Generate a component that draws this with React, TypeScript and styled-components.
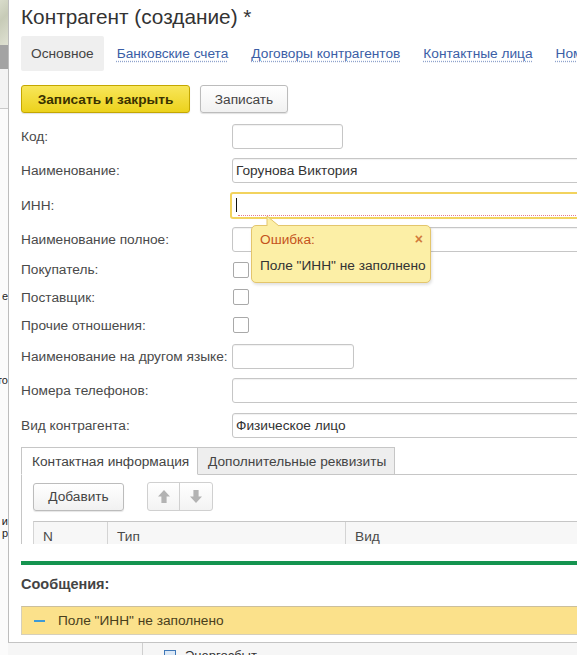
import React from 'react';
import styled, { createGlobalStyle } from 'styled-components';

const Global = createGlobalStyle`
  html, body { margin: 0; padding: 0; overflow: hidden; background: #ffffff; }
  body { font-family: "Liberation Sans", Arial, sans-serif; }
  * { box-sizing: border-box; }
`;

const Page = styled.div`
  width: 577px;
  height: 655px;
  overflow: hidden;
  display: grid;
  grid-template-columns: 8px 1fr;
  grid-template-rows: 643px 12px;
`;

const BackStrip = styled.div`
  grid-column: 1;
  grid-row: 1 / 3;
  display: flex;
  flex-direction: column;
  background: #fbfbfb;
  overflow: hidden;
  font-size: 11px;
  color: #222;
`;

const BackBlock = styled.div<{ $h: number; $bg: string; $line?: boolean }>`
  height: ${p => p.$h}px;
  flex: none;
  background: ${p => p.$bg};
  border-bottom: ${p => (p.$line ? '1px solid #c9c9c9' : 'none')};
`;

const BackText = styled.div<{ $h: number }>`
  height: ${p => p.$h}px;
  flex: none;
  line-height: ${p => p.$h}px;
  white-space: nowrap;
  overflow: hidden;
  display: flex;
  justify-content: flex-end;
`;

const BottomStrip = styled.div`
  grid-column: 2;
  grid-row: 2;
  background: #f6f6f6;
  display: flex;
  align-items: flex-start;
  overflow: hidden;
  font-size: 13px;
  color: #333;
`;

const StripDivider = styled.div`
  margin-left: 134px;
  width: 1px;
  height: 12px;
  background: #cfcfcf;
`;

const StripIcon = styled.div`
  margin: 7px 0 0 21px;
  width: 12px;
  height: 10px;
  border: 1px solid #3f78b8;
  background: #dbe8f6;
`;

const StripText = styled.div`
  margin: 6px 0 0 9px;
  line-height: 14px;
`;

const Window = styled.div`
  grid-column: 2;
  grid-row: 1;
  width: 640px;
  min-width: 0;
  background: #ffffff;
  border-left: 1px solid #bdbdbd;
  border-bottom: 1px solid #c4c4c4;
  display: flex;
  flex-direction: column;
  color: #444;
  font-size: 13.7px;
`;

const FormArea = styled.div`
  height: 544px;
  flex: none;
  overflow: hidden;
  padding-left: 12px;
`;

const Title = styled.h1`
  margin: 0;
  padding-top: 5px;
  font-size: 20.8px;
  line-height: 24px;
  font-weight: normal;
  color: #333;
`;

const Nav = styled.div`
  margin-top: 7px;
  height: 35px;
  display: flex;
  align-items: stretch;
  white-space: nowrap;
`;

const NavCurrent = styled.div`
  background: #efefef;
  padding: 0 10px;
  margin-right: 2px;
  display: flex;
  align-items: center;
  color: #444;
  border-radius: 2px;
`;

const NavLink = styled.a`
  padding: 0 12px 0 11px;
  display: flex;
  align-items: center;
  color: #3b5ea6;
  text-decoration: underline dotted #8fa3cc;
  text-underline-offset: 3px;
  cursor: pointer;
`;

const Toolbar = styled.div`
  margin-top: 14px;
  display: flex;
  gap: 10px;
  height: 28px;
`;

const Button = styled.button<{ $primary?: boolean; $w: number }>`
  width: ${p => p.$w}px;
  height: 28px;
  border-radius: 3px;
  font-family: inherit;
  font-size: 13.7px;
  padding: 0;
  cursor: pointer;
  color: ${p => (p.$primary ? '#3a3200' : '#444')};
  font-weight: ${p => (p.$primary ? 'bold' : 'normal')};
  border: 1px solid ${p => (p.$primary ? '#c4a700' : '#bcbcbc')};
  background: ${p =>
    p.$primary
      ? 'linear-gradient(#f8e65a, #ecd21c)'
      : 'linear-gradient(#ffffff, #f1f1f1)'};
  box-shadow: 0 1px 1px rgba(0, 0, 0, 0.12);
`;

const Form = styled.div`
  margin-top: 6px;
  display: flex;
  flex-direction: column;
`;

const Row = styled.div<{ $h: number }>`
  position: relative;
  height: ${p => p.$h}px;
  display: flex;
  align-items: center;
`;

const Label = styled.div`
  width: 211px;
  flex: none;
  color: #4a4a4a;
  white-space: nowrap;
`;

const Input = styled.div<{ $w?: number }>`
  height: 25px;
  ${p => (p.$w ? `width: ${p.$w}px;` : 'flex: 1;')}
  border: 1px solid #c6c6c6;
  border-radius: 3px;
  background: #fff;
  box-shadow: inset 0 1px 1px rgba(0, 0, 0, 0.06);
  display: flex;
  align-items: center;
  padding-left: 3px;
  color: #333;
`;

const FocusedInput = styled.div`
  flex: 1;
  height: 27px;
  margin-left: -2px;
  border: 2px solid #f2d35e;
  border-radius: 3px;
  background: #fff;
  display: flex;
  align-items: center;
  padding: 0 0 0 4px;
`;

const Caret = styled.div`
  width: 1px;
  height: 14px;
  background: #111;
  flex: none;
`;

const ErrorUnderline = styled.div`
  position: absolute;
  left: 6px;
  right: 0;
  bottom: 3px;
  border-bottom: 1px dotted #e87b8b;
`;

const FocusWrap = styled.div`
  position: relative;
  flex: 1;
  display: flex;
`;

const Checkbox = styled.div`
  width: 16px;
  height: 16px;
  margin-left: 1px;
  border: 1px solid #a9a9a9;
  border-radius: 2px;
  background: #fff;
`;

const Tooltip = styled.div`
  position: absolute;
  left: 230px;
  top: 37px;
  width: 180px;
  height: 58px;
  background: #fcefa6;
  border: 1px solid #e3c56c;
  border-radius: 5px;
  box-shadow: 1px 2px 3px rgba(0, 0, 0, 0.12);
  padding: 5px 0 0 8px;
  z-index: 2;
`;

const TooltipArrow = styled.svg`
  position: absolute;
  left: 14px;
  top: -10px;
`;

const TooltipHead = styled.div`
  display: flex;
  justify-content: space-between;
  align-items: center;
  height: 16px;
  padding-right: 7px;
  color: #c4531c;
`;

const TooltipClose = styled.span`
  color: #d27a3b;
  font-size: 14px;
  font-weight: bold;
`;

const TooltipText = styled.div`
  margin-top: 11px;
  color: #333;
`;

const TabsBox = styled.div`
  margin-top: 5px;
`;

const TabsHead = styled.div`
  display: flex;
  height: 28px;
  white-space: nowrap;
`;

const Tab = styled.div<{ $active?: boolean; $w: number }>`
  width: ${p => p.$w}px;
  flex: none;
  border: 1px solid #c6c6c6;
  border-left-width: ${p => (p.$active ? 1 : 0)}px;
  border-bottom-color: ${p => (p.$active ? '#ffffff' : '#c6c6c6')};
  background: ${p => (p.$active ? '#ffffff' : '#eeeeee')};
  color: #444;
  padding-left: 10px;
  display: flex;
  align-items: center;
`;

const TabFiller = styled.div`
  flex: 1;
  border-bottom: 1px solid #c6c6c6;
`;

const TabBody = styled.div`
  border-left: 1px solid #c6c6c6;
  padding: 7px 0 0 11px;
  height: 80px;
`;

const TabToolbar = styled.div`
  display: flex;
  align-items: center;
  gap: 23px;
  height: 29px;
`;

const SmallButton = styled.button`
  width: 91px;
  height: 28px;
  border: 1px solid #bcbcbc;
  border-radius: 3px;
  background: linear-gradient(#ffffff, #f1f1f1);
  box-shadow: 0 1px 1px rgba(0, 0, 0, 0.1);
  font-family: inherit;
  font-size: 13.7px;
  color: #444;
  padding: 0;
`;

const ArrowGroup = styled.div`
  display: flex;
  height: 29px;
  border: 1px solid #d0d0d0;
  border-radius: 3px;
  background: linear-gradient(#ffffff, #f3f3f3);
`;

const ArrowCell = styled.div<{ $first?: boolean }>`
  width: 32px;
  display: flex;
  align-items: center;
  justify-content: center;
  border-right: ${p => (p.$first ? '1px solid #d0d0d0' : 'none')};
`;

const Table = styled.div`
  margin-top: 10px;
  display: grid;
  grid-template-columns: 74px 238px 1fr;
  height: 26px;
  border-top: 1px solid #c6c6c6;
  border-left: 1px solid #d4d4d4;
  background: #f7f7f7;
`;

const HeadCell = styled.div<{ $last?: boolean }>`
  padding-left: 9px;
  display: flex;
  align-items: center;
  color: #4a4a4a;
  border-right: ${p => (p.$last ? 'none' : '1px solid #d4d4d4')};
  padding-top: 4px;
`;

const Messages = styled.div`
  flex: 1;
  padding-left: 12px;
  display: flex;
  flex-direction: column;
`;

const GreenLine = styled.div`
  margin-top: 17px;
  height: 4px;
  background: #159450;
`;

const MessagesTitle = styled.div`
  margin-top: 9px;
  line-height: 20px;
  font-size: 14.5px;
  font-weight: bold;
  color: #444;
`;

const MessageBar = styled.div`
  margin-top: 12px;
  height: 29px;
  background: #fbe18b;
  border-top: 1px solid #cbbf9c;
  border-bottom: 1px solid #d6cfba;
  border-left: 1px solid #d6cfba;
  display: flex;
  align-items: center;
  padding-left: 12px;
  color: #4a3f1c;
`;

const Dash = styled.div`
  width: 11px;
  height: 2px;
  background: #3e9ad6;
  margin-right: 13px;
`;

const ArrowIcon = ({ down }: { down?: boolean }) => (
  <svg width="12" height="13" viewBox="0 0 12 13" style={{ transform: down ? 'rotate(180deg)' : undefined }}>
    <path d="M6 0 L12 6.5 L8.6 6.5 L8.6 13 L3.4 13 L3.4 6.5 L0 6.5 Z" fill="#b3b3b3" />
  </svg>
);

export default function App() {
  return (
    <>
      <Global />
      <Page>
        <BackStrip>
          <BackBlock $h={45} $bg="linear-gradient(135deg,#d9dccb,#c7cbb7 40%,#dfe1d2)" />
          <BackBlock $h={24} $bg="#a3a3a3" />
          <BackBlock $h={40} $bg="#f3f3f3" $line />
          <BackBlock $h={181} $bg="#fbfbfb" />
          <BackText $h={13}>е</BackText>
          <BackBlock $h={71} $bg="#fbfbfb" />
          <BackText $h={13}>то</BackText>
          <BackBlock $h={128} $bg="#fbfbfb" />
          <BackText $h={12}>и</BackText>
          <BackText $h={12}>р</BackText>
        </BackStrip>
        <Window>
          <FormArea>
            <Title>Контрагент (создание) *</Title>
            <Nav>
              <NavCurrent>Основное</NavCurrent>
              <NavLink>Банковские счета</NavLink>
              <NavLink>Договоры контрагентов</NavLink>
              <NavLink>Контактные лица</NavLink>
              <NavLink>Номенклатура</NavLink>
            </Nav>
            <Toolbar>
              <Button $primary $w={169}>Записать и закрыть</Button>
              <Button $w={88}>Записать</Button>
            </Toolbar>
            <Form>
              <Row $h={34}>
                <Label>Код:</Label>
                <Input $w={111} />
              </Row>
              <Row $h={35}>
                <Label>Наименование:</Label>
                <Input>Горунова Виктория</Input>
              </Row>
              <Row $h={34}>
                <Label>ИНН:</Label>
                <FocusWrap>
                  <FocusedInput>
                    <Caret />
                  </FocusedInput>
                  <ErrorUnderline />
                </FocusWrap>
                <Tooltip>
                  <TooltipArrow width="16" height="11" viewBox="0 0 16 11">
                    <path d="M1 0 L1 10.5 L14 10.5 Z" fill="#fcefa6" />
                    <path d="M1 0 L1 10 M1 0 L13 10" stroke="#e3c56c" strokeWidth="1" fill="none" />
                  </TooltipArrow>
                  <TooltipHead>
                    <span>Ошибка:</span>
                    <TooltipClose>×</TooltipClose>
                  </TooltipHead>
                  <TooltipText>Поле "ИНН" не заполнено</TooltipText>
                </Tooltip>
              </Row>
              <Row $h={34}>
                <Label>Наименование полное:</Label>
                <Input />
              </Row>
              <Row $h={27}>
                <Label>Покупатель:</Label>
                <Checkbox />
              </Row>
              <Row $h={28}>
                <Label>Поставщик:</Label>
                <Checkbox />
              </Row>
              <Row $h={28}>
                <Label>Прочие отношения:</Label>
                <Checkbox />
              </Row>
              <Row $h={34}>
                <Label>Наименование на другом языке:</Label>
                <Input $w={122} />
              </Row>
              <Row $h={35}>
                <Label>Номера телефонов:</Label>
                <Input />
              </Row>
              <Row $h={34}>
                <Label>Вид контрагента:</Label>
                <Input>Физическое лицо</Input>
              </Row>
            </Form>
            <TabsBox>
              <TabsHead>
                <Tab $active $w={177}>Контактная информация</Tab>
                <Tab $w={197}>Дополнительные реквизиты</Tab>
                <TabFiller />
              </TabsHead>
              <TabBody>
                <TabToolbar>
                  <SmallButton>Добавить</SmallButton>
                  <ArrowGroup>
                    <ArrowCell $first><ArrowIcon /></ArrowCell>
                    <ArrowCell><ArrowIcon down /></ArrowCell>
                  </ArrowGroup>
                </TabToolbar>
                <Table>
                  <HeadCell>N</HeadCell>
                  <HeadCell>Тип</HeadCell>
                  <HeadCell $last>Вид</HeadCell>
                </Table>
              </TabBody>
            </TabsBox>
          </FormArea>
          <Messages>
            <GreenLine />
            <MessagesTitle>Сообщения:</MessagesTitle>
            <MessageBar>
              <Dash />
              Поле "ИНН" не заполнено
            </MessageBar>
          </Messages>
        </Window>
        <BottomStrip>
          <StripDivider />
          <StripIcon />
          <StripText>Энергосбыт</StripText>
        </BottomStrip>
      </Page>
    </>
  );
}
